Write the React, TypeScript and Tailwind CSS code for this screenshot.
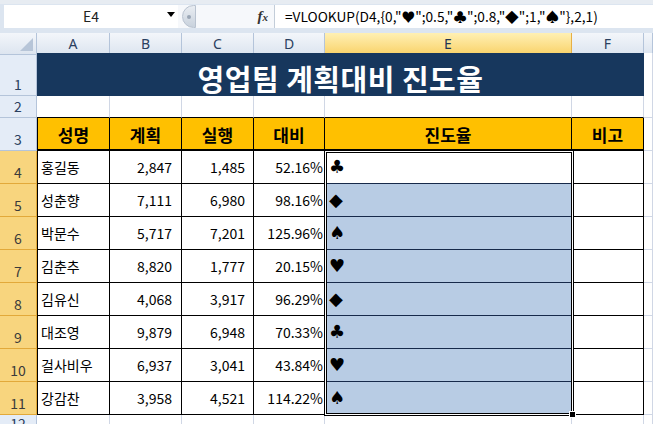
import React from 'react';

const cols = 'grid grid-cols-[37px_73px_72px_72px_71px_247px_72px_1fr]';

type Row = { name: string; plan: string; actual: string; ratio: string; mark: string };

const rows: Row[] = [
  { name: '홍길동', plan: '2,847', actual: '1,485', ratio: '52.16%', mark: '♣' },
  { name: '성춘향', plan: '7,111', actual: '6,980', ratio: '98.16%', mark: '◆' },
  { name: '박문수', plan: '5,717', actual: '7,201', ratio: '125.96%', mark: '♠' },
  { name: '김춘추', plan: '8,820', actual: '1,777', ratio: '20.15%', mark: '♥' },
  { name: '김유신', plan: '4,068', actual: '3,917', ratio: '96.29%', mark: '◆' },
  { name: '대조영', plan: '9,879', actual: '6,948', ratio: '70.33%', mark: '♣' },
  { name: '걸사비우', plan: '6,937', actual: '3,041', ratio: '43.84%', mark: '♥' },
  { name: '강감찬', plan: '3,958', actual: '4,521', ratio: '114.22%', mark: '♠' },
];

const RowHead = ({ n, sel, h }: { n: number; sel?: boolean; h: string }) => (
  <div
    className={`${h} flex items-end justify-center pb-[2px] border-r border-b text-[14px] leading-[18px] ${
      sel ? 'bg-[#F8D57E] border-[#E2A93A] text-[#3B3B3B]' : 'bg-[#E4ECF7] border-[#B4C4DA] text-[#2A4060]'
    }`}
  >
    {n}
  </div>
);

const Grid = ({ cls = '' }: { cls?: string }) => (
  <div className={`border-r border-b border-[#D0D7E5] bg-white ${cls}`} />
);

export default function App() {
  return (
    <div className="relative w-[653px] h-[424px] overflow-hidden bg-white font-['Noto_Sans_CJK_KR',sans-serif] text-black">
      {/* formula bar */}
      <div className="h-[33px] bg-[#DCE5F0] border-t-[4px] border-[#E7ECF2] pl-[4px] pt-[1px]">
        <div className="flex h-[23px]">
          <div className="relative w-[174px] bg-white flex items-center justify-center text-[14px] text-[#222]">
            E4
            <span className="absolute right-[3px] top-[7px] w-0 h-0 border-l-[4px] border-r-[4px] border-t-[5px] border-l-transparent border-r-transparent border-t-black" />
          </div>
          <div className="relative w-[96px] bg-[#F6F8FB] flex items-center">
            <div className="ml-[4px] w-[14px] h-[23px] rounded-l-full bg-linear-to-b from-[#E9EDF2] to-[#C9D2DD] border border-[#B9C3D0] flex items-center justify-center">
              <span className="w-[4px] h-[4px] rounded-full bg-[#9AA6B5]" />
            </div>
            <span className="ml-auto mr-[6px] font-['Liberation_Serif',serif] italic font-bold text-[15px] text-[#333] leading-none">
              f<span className="text-[11px]">x</span>
            </span>
          </div>
          <div className="flex-1 bg-white border-l border-[#C3CDD9] flex items-center pl-[10px] text-[13.7px] whitespace-nowrap">
            =VLOOKUP(D4,{'{'}0,"♥";0.5,"♣";0.8,"◆";1,"♠"{'}'},2,1)
          </div>
        </div>
      </div>

      {/* column headers */}
      <div className={`${cols} h-[20px] text-[14px] text-[#2A4060] font-['Noto_Sans',sans-serif]`}>
        <div className="relative border-r border-b border-[#B4C4DA] bg-linear-to-b from-[#F3F6FA] to-[#DDE5F0]">
          <svg className="absolute right-[3px] bottom-[3px]" width="13" height="13" viewBox="0 0 13 13">
            <polygon points="13,0 13,13 0,13" fill="#B7C5D8" />
          </svg>
        </div>
        {['A', 'B', 'C', 'D', 'E', 'F', ''].map((c) => (
          <div
            key={c || 'g'}
            className={`flex items-center justify-center border-r border-b ${
              c === 'E'
                ? 'bg-linear-to-b from-[#FFF0B3] to-[#F9D36A] border-[#E7AF45] text-[#1E3555]'
                : 'bg-linear-to-b from-[#F3F6FA] to-[#DDE5F0] border-[#B4C4DA]'
            }`}
          >
            {c}
          </div>
        ))}
      </div>

      {/* row 1 */}
      <div className={`${cols} h-[43px]`}>
        <RowHead n={1} h="h-[43px]" />
        <div className="col-span-6 bg-[#17375D] text-white font-bold text-[29px] flex items-center justify-center pt-[4px] tracking-[0.5px]">
          영업팀 계획대비 진도율
        </div>
        <Grid />
      </div>

      {/* row 2 */}
      <div className={`${cols} h-[22px]`}>
        <RowHead n={2} h="h-[22px]" />
        {[0, 1, 2, 3, 4, 5].map((i) => (
          <div key={i} className="bg-white border-r border-[#D0D7E5] border-b border-b-black" />
        ))}
        <Grid />
      </div>

      {/* row 3 */}
      <div className={`${cols} h-[33px]`}>
        <RowHead n={3} h="h-[33px]" />
        {['성명', '계획', '실행', '대비', '진도율', '비고'].map((t, i) => (
          <div
            key={t}
            className={`bg-[#FFC000] border-r border-b-2 border-black flex items-center justify-center pt-[3px] font-bold text-[17px] ${
              i === 0 ? 'border-l' : ''
            }`}
          >
            {t}
          </div>
        ))}
        <Grid />
      </div>

      {/* data rows */}
      {rows.map((r, i) => (
        <div key={r.name} className={`${cols} h-[33px] text-[14px]`}>
          <RowHead n={i + 4} sel h="h-[33px]" />
          <div className="bg-white border-l border-r border-b border-black flex items-center pl-[3px]">{r.name}</div>
          <div className="bg-white border-r border-b border-black flex items-center justify-end pr-[9px]">{r.plan}</div>
          <div className="bg-white border-r border-b border-black flex items-center justify-end pr-[8px]">{r.actual}</div>
          <div className="bg-white border-r border-b border-black flex items-center justify-end pr-[1px]">{r.ratio}</div>
          <div
            className={`border-r border-b flex items-center pl-[4px] ${i === 0 ? 'bg-white' : 'bg-[#B8CCE4]'} ${
              i === rows.length - 1 ? 'border-black' : 'border-r-black border-b-[#16294A]'
            }`}
          >
            <span className="font-['DejaVu_Sans',sans-serif] text-[18px] leading-none">{r.mark}</span>
          </div>
          <div className="bg-white border-r border-b border-black" />
          <Grid />
        </div>
      ))}

      {/* row 12 */}
      <div className={`${cols} h-[20px]`}>
        <RowHead n={12} h="h-[20px]" />
        {[0, 1, 2, 3, 4, 5, 6].map((i) => (
          <Grid key={i} />
        ))}
      </div>

      {/* selection E4:E11 */}
      <div className="absolute left-[324px] top-[150px] w-[250px] h-[266px] border border-black shadow-[inset_0_0_0_1px_white,inset_0_0_0_2px_black] pointer-events-none" />
      <div className="absolute left-[569px] top-[411px] w-[7px] h-[7px] bg-black border border-white pointer-events-none" />
    </div>
  );
}
